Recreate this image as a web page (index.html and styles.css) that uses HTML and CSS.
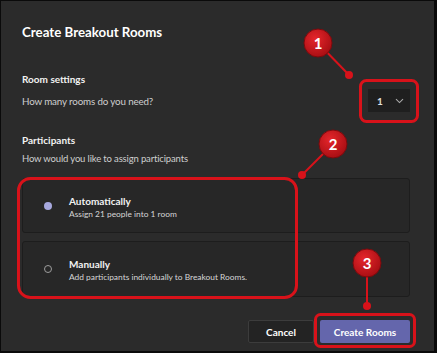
FILE: index.html
```html
<!DOCTYPE html>
<html>
<head>
    <title>Create Breakout Rooms</title>
    <link rel="stylesheet" href="styles.css">
</head>
<body>
    <div class="dialog">
        <h1 class="title">Create Breakout Rooms</h1>

        <div class="section room-settings">
            <h2>Room settings</h2>
            <div class="setting-row">
                <span class="hint">How many rooms do you need?</span>
                <div class="dropdown">
                    <span>1</span>
                    <svg class="chevron" width="9" height="6" viewBox="0 0 9 6">
                        <path d="M1 1.2 L4.5 4.6 L8 1.2" fill="none" stroke="#a9a9a9" stroke-width="1.1"/>
                    </svg>
                </div>
            </div>
        </div>

        <div class="section participants">
            <h2>Participants</h2>
            <p class="hint">How would you like to assign participants</p>
            <div class="options">
                <div class="option">
                    <span class="radio checked"></span>
                    <div class="option-text">
                        <strong>Automatically</strong>
                        <span>Assign 21 people into 1 room</span>
                    </div>
                </div>
                <div class="option">
                    <span class="radio"></span>
                    <div class="option-text">
                        <strong>Manually</strong>
                        <span>Add participants individually to Breakout Rooms.</span>
                    </div>
                </div>
            </div>
        </div>

        <div class="actions">
            <button class="btn cancel">Cancel</button>
            <button class="btn primary">Create Rooms</button>
        </div>

        <!-- callouts drawn over the dialog -->
        <svg class="callouts" width="437" height="353" viewBox="0 0 437 353">
            <defs>
                <radialGradient id="bubble" cx="40%" cy="35%" r="70%">
                    <stop offset="0" stop-color="#e5262b"/>
                    <stop offset="1" stop-color="#a50d12"/>
                </radialGradient>
            </defs>
            <g fill="none" stroke="#d8121a" stroke-width="3">
                <rect x="360.5" y="80.5" width="57" height="41" rx="6"/>
                <rect x="18.5" y="178.5" width="278" height="119" rx="12"/>
                <rect x="315.5" y="314.5" width="99" height="32" rx="5"/>
            </g>
            <g stroke="#d8121a" stroke-width="2">
                <line x1="318" y1="43" x2="349" y2="75"/>
                <line x1="333" y1="144" x2="302" y2="175"/>
                <line x1="367" y1="263" x2="367" y2="306"/>
            </g>
            <g fill="#d8121a">
                <circle cx="349" cy="75" r="4"/>
                <circle cx="302" cy="175" r="4"/>
                <circle cx="367" cy="306" r="4"/>
            </g>
            <g fill="url(#bubble)" stroke="#7a0a0d" stroke-width="1">
                <circle cx="318" cy="43" r="14"/>
                <circle cx="333" cy="144" r="14"/>
                <circle cx="367" cy="263" r="14"/>
            </g>
            <g class="num" fill="#fff" text-anchor="middle">
                <text x="318" y="48.5">1</text>
                <text x="333" y="149.5">2</text>
                <text x="367" y="268.5">3</text>
            </g>
        </svg>
    </div>
</body>
</html>
```

FILE: styles.css
```css
body {
    margin: 0;
    background-color: #0a0a0a;
    font-family: Lato, "Open Sans", sans-serif;
    color: #e6e6e6;
}

.dialog {
    position: relative;
    box-sizing: border-box;
    width: 437px;
    height: 353px;
    border-style: solid;
    border-color: #0a0a0a;
    border-width: 1px 3px 2px 1px;
    background-color: #2b2b2b;
    padding: 21px 24px 0 21px;
}

.title {
    margin: 0;
    font-size: 13.3px;
    line-height: 20px;
    font-weight: bold;
    color: #fff;
}

h2 {
    margin: 0;
    font-size: 10px;
    line-height: 16px;
    font-weight: bold;
    color: #f2f2f2;
}

.hint {
    margin: 0;
    font-size: 9.8px;
    line-height: 16px;
    letter-spacing: -0.15px;
    color: #cfcfcf;
}

.room-settings {
    margin-top: 29px;
}

.setting-row {
    display: flex;
    justify-content: space-between;
    align-items: center;
    margin-top: 2px;
}

.dropdown {
    display: flex;
    align-items: center;
    justify-content: space-between;
    box-sizing: border-box;
    width: 42px;
    height: 23px;
    padding: 0 6px 0 9px;
    background-color: #1f1f1f;
    font-size: 10px;
    font-weight: bold;
    color: #e0e0e0;
}

.participants {
    margin-top: 20px;
}

.participants .hint {
    margin-top: 3px;
    font-size: 9.5px;
}

.options {
    display: flex;
    flex-direction: column;
    gap: 8px;
    margin-top: 11px;
}

.option {
    display: flex;
    align-items: center;
    box-sizing: border-box;
    height: 55px;
    padding-left: 21px;
    background-color: #272727;
    border: 1px solid #1d1d1d;
    border-radius: 3px;
}

.option + .option {
    height: 56px;
}

.radio {
    box-sizing: border-box;
    width: 8px;
    height: 8px;
    border-radius: 50%;
    border: 1px solid #9d9d9d;
    margin-right: 17px;
}

.radio.checked {
    border: none;
    background-color: #a7a8de;
}

.option-text {
    display: flex;
    flex-direction: column;
    padding-top: 3px;
}

.option-text strong {
    font-size: 10px;
    line-height: 14px;
    color: #f2f2f2;
}

.option-text span {
    font-size: 8.4px;
    line-height: 13px;
    color: #d6d6d6;
}

.actions {
    display: flex;
    justify-content: flex-end;
    gap: 6px;
    margin-top: 23px;
}

.btn {
    box-sizing: border-box;
    height: 23px;
    border-radius: 2px;
    font-family: inherit;
    font-size: 10px;
    font-weight: bold;
    color: #fff;
    cursor: pointer;
}

.cancel {
    width: 66px;
    background-color: #232323;
    border: 1px solid #3c3c3c;
}

.primary {
    width: 90px;
    background-color: #6466ac;
    border: none;
}

.callouts {
    position: absolute;
    left: -1px;
    top: -1px;
    pointer-events: none;
}

.num text {
    font-family: Lato, sans-serif;
    font-size: 15px;
    font-weight: bold;
}
```
